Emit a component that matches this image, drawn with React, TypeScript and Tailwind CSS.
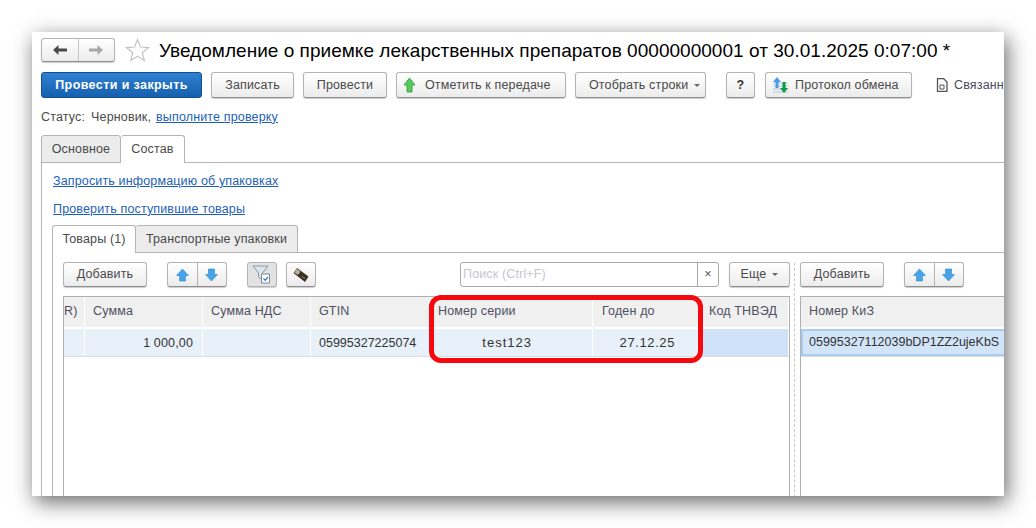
import type { ReactNode } from "react";

const btn =
  "flex shrink-0 items-center justify-center h-[26px] rounded-[3px] border border-[#b4b4b4] border-b-[#8f8f8f] bg-gradient-to-b from-white to-[#ececec] shadow-[0_1px_1px_rgba(0,0,0,0.2)] text-[#4a4a4a] whitespace-nowrap";

function Btn({ className, children }: { className: string; children: ReactNode }) {
  return <div className={`${btn} ${className}`}>{children}</div>;
}

function Caret() {
  return <span className="ml-[6px] h-0 w-0 border-x-[3px] border-t-[3px] border-x-transparent border-t-[#666]" />;
}

function ArrowPair() {
  return (
    <div className={`${btn} w-[60px] !h-[25px]`}>
      <div className="flex h-full w-[30px] items-center justify-center border-r border-[#b4b4b4]">
        <svg width="13" height="14" viewBox="0 0 13 14">
          <path d="M6.500 1 12.500 7.500H9.500V13h-6V7.500H.5z" fill="#45a5ea" stroke="#2f86c8" strokeWidth="0.6" />
        </svg>
      </div>
      <div className="flex h-full w-[29px] items-center justify-center">
        <svg width="13" height="14" viewBox="0 0 13 14">
          <path d="M6.500 13 12.500 6.500H9.500V1h-6v5.500H.5z" fill="#45a5ea" stroke="#2f86c8" strokeWidth="0.6" />
        </svg>
      </div>
    </div>
  );
}

function HeadCell({ className, children }: { className: string; children?: ReactNode }) {
  return (
    <div className={`flex h-[32px] shrink-0 items-center border-r border-b-2 border-white bg-[#f0f0f0] pb-[2px] pl-2 text-[#4f4f5f] ${className}`}>
      {children}
    </div>
  );
}

function RowCell({ className, children }: { className: string; children?: ReactNode }) {
  return <div className={`flex h-[27px] shrink-0 items-center border-r border-white bg-[#e8f0f9] pt-[1px] text-[#333] ${className}`}>{children}</div>;
}

export default function App() {
  return (
    <div className="h-[528px] w-[1036px] overflow-hidden bg-white pl-[32px] pt-[32px] font-['Liberation_Sans',Arial,sans-serif] text-[12.5px] tracking-[0.15px]">
      <div className="relative h-[464px] w-[972px] overflow-hidden bg-white shadow-[3px_6px_20px_rgba(0,0,0,0.6)]">
        <div className="flex h-[40px] items-start pl-[9px] pt-[6px]">
          <div className={`${btn} w-[74px] !h-[24px]`}>
            <div className="flex h-full w-[37px] items-center justify-center border-r border-[#c8c8c8]">
              <svg width="14" height="10" viewBox="0 0 14 10">
                <path d="M0 5 5.500 0v3.500H14v3H5.500V10z" fill="#4a4a4a" />
              </svg>
            </div>
            <div className="flex h-full w-[36px] items-center justify-center">
              <svg width="14" height="10" viewBox="0 0 14 10">
                <path d="M14 5 8.500 0v3.500H0v3h8.500V10z" fill="#a8a8a8" />
              </svg>
            </div>
          </div>
          <svg className="ml-[10px] shrink-0" width="25" height="24" viewBox="0 0 25 24">
            <path d="M12.500 1.500 15.500 9l8 .6-6.200 5.100 2 7.800-6.800-4.300-6.800 4.300 2-7.800L1.500 9.600l8-.6z" fill="#fff" stroke="#c4c4c4" strokeWidth="1.200" />
          </svg>
          <h1 className="ml-[9px] mt-[3px] whitespace-nowrap text-[19px] leading-[19px] tracking-[0.03px] text-black">
            Уведомление о приемке лекарственных препаратов 00000000001 от 30.01.2025 0:07:00 *
          </h1>
        </div>

        <div className="flex items-center pl-[9px]">
          <div className="flex h-[26px] w-[161px] shrink-0 items-center justify-center rounded-[3px] border border-[#0f4f94] bg-gradient-to-b from-[#2f80d0] to-[#1560ae] font-bold tracking-[0.4px] text-white">
            Провести и закрыть
          </div>
          <Btn className="ml-[9px] w-[83px]">Записать</Btn>
          <Btn className="ml-[9px] w-[84px]">Провести</Btn>
          <Btn className="ml-[9px] w-[170px] !justify-start pl-[6px]">
            <svg className="mr-[9px]" width="13" height="16" viewBox="0 0 13 16">
              <path d="M6.500 1 12 8H9v7H4V8H1z" fill="#55c95a" stroke="#2f9c3a" strokeWidth="0.8" />
            </svg>
            Отметить к передаче
          </Btn>
          <Btn className="ml-[9px] w-[131px] !justify-start pl-[13px]">
            Отобрать строки
            <Caret />
          </Btn>
          <Btn className="ml-[20px] w-[29px] font-bold text-[#333]">?</Btn>
          <Btn className="ml-[10px] w-[147px] !justify-start pl-[6px]">
            <svg className="mr-[6px]" width="17" height="17" viewBox="0 0 17 17">
              <path d="M1 6h15M1 9h15M1 12h15M1 15h15" stroke="#b4c4d4" strokeWidth="1" />
              <path d="M5 0 9 5H6.500v6h-3V5H1z" fill="#4a9bf0" />
              <path d="M12 16 8 11h2.500V5h3v6H16z" fill="#0c9a46" />
            </svg>
            Протокол обмена
          </Btn>
          <div className="ml-[24px] flex shrink-0 items-center whitespace-nowrap text-[#4a4a5a]">
            <svg className="mr-[6px]" width="12" height="14" viewBox="0 0 12 14">
              <path d="M1.500.5h6l3.500 3.500v9.500h-9.500z" fill="#fff" stroke="#555" strokeWidth="1.300" />
              <path d="M4 7h4v4H4z" fill="none" stroke="#555" strokeWidth="1" />
            </svg>
            Связанн
          </div>
        </div>

        <div className="mt-[10px] flex h-[18px] items-center pl-[9px] text-[#4a4a4a]">
          <span>Статус:</span>
          <span className="ml-[6px]">Черновик,</span>
          <a className="ml-[5px] text-[#1d5fb8] underline">выполните проверку</a>
        </div>

        <div className="mt-[9px] flex h-[28px] pl-[9px]">
          <div className="flex h-[28px] w-[80px] items-center justify-center rounded-t-[3px] border border-[#b4b4b4] bg-[#ececec] text-[#4a4a4a]">
            Основное
          </div>
          <div className="z-10 flex h-[28px] w-[64px] items-center justify-center rounded-t-[3px] border border-b-0 border-l-0 border-[#b4b4b4] bg-white text-[#4a4a4a]">
            Состав
          </div>
        </div>

        <div className="-mt-px ml-[9px] h-[400px] border-l border-t border-[#b4b4b4] pl-[10px]">
          <div className="mt-[9px] flex h-[18px] items-center pl-[1px]">
            <a className="text-[#1d5fb8] underline">Запросить информацию об упаковках</a>
          </div>
          <div className="mt-[10px] flex h-[18px] items-center pl-[1px]">
            <a className="text-[#1d5fb8] underline">Проверить поступившие товары</a>
          </div>

          <div className="mt-[7px] flex h-[28px]">
            <div className="z-10 flex h-[28px] w-[84px] items-center justify-center rounded-t-[3px] border border-b-0 border-[#b4b4b4] bg-white text-[#4a4a4a]">
              Товары (1)
            </div>
            <div className="flex h-[28px] w-[162px] items-center justify-center rounded-t-[3px] border border-l-0 border-[#b4b4b4] bg-[#ececec] text-[#4a4a4a]">
              Транспортные упаковки
            </div>
          </div>

          <div className="-mt-px h-[400px] border-l border-t border-[#b4b4b4] pl-[10px]">
            <div className="flex">
              <div className="w-[727px] shrink-0">
                <div className="flex h-[43px] items-center">
                  <Btn className="w-[84px] !h-[25px]">Добавить</Btn>
                  <div className="ml-[20px]">
                    <ArrowPair />
                  </div>
                  <div className="ml-[20px] flex h-[25px] w-[30px] shrink-0 items-center justify-center rounded-[3px] border border-[#b4b4b4] bg-[#e2e2e2] shadow-[0_1px_1px_rgba(0,0,0,0.2)]">
                    <svg width="20" height="19" viewBox="0 0 20 19">
                      <path d="M1 1h15l-5.500 7v7l-4-3V8z" fill="#dce6ee" stroke="#8a9aa8" strokeWidth="1" />
                      <path d="M9.500 9h8v9h-8z" fill="#fff" stroke="#7a8a98" strokeWidth="1" />
                      <path d="m11.500 13.500 1.700 1.800 2.800-3.500" fill="none" stroke="#2a6fd0" strokeWidth="1.200" />
                    </svg>
                  </div>
                  <div className={`${btn} ml-[9px] w-[30px] !h-[25px]`}>
                    <svg width="16" height="16" viewBox="0 0 16 16">
                      <path d="M4 1 15.500 9.500 12 15 .5 6z" fill="#3a3226" />
                      <path d="M3.800 1.800 7.500 4.500 5 8 1.300 5.500z" fill="#b8b09a" />
                      <path d="M9 9.500l3 2" stroke="#a08a50" strokeWidth="1" />
                    </svg>
                  </div>
                  <div className="ml-[144px] flex h-[25px] w-[259px] shrink-0 items-center rounded-[3px] border border-[#a8a8a8] bg-white">
                    <span className="flex-1 pl-[2px] text-[#c9c4d0]">Поиск (Ctrl+F)</span>
                    <span className="flex h-full w-[21px] items-center justify-center border-l border-[#a8a8a8] text-[#555]">×</span>
                  </div>
                  <Btn className="ml-[10px] w-[61px] !h-[25px]">
                    Еще
                    <Caret />
                  </Btn>
                </div>
                <div className="h-[300px] border-x border-t border-[#b0b0b0]">
                  <div className="flex">
                    <HeadCell className="w-[21px] !pl-0">R)</HeadCell>
                    <HeadCell className="w-[118px]">Сумма</HeadCell>
                    <HeadCell className="w-[108px]">Сумма НДС</HeadCell>
                    <HeadCell className="w-[120px]">GTIN</HeadCell>
                    <HeadCell className="w-[162px] !pl-[7px]">Номер серии</HeadCell>
                    <HeadCell className="w-[108px] !pl-[9px]">Годен до</HeadCell>
                    <HeadCell className="flex-1">Код ТНВЭД</HeadCell>
                  </div>
                  <div className="flex border-b border-[#dcdcdc]">
                    <RowCell className="w-[21px]" />
                    <RowCell className="w-[118px] justify-end pr-[9px]">1 000,00</RowCell>
                    <RowCell className="w-[108px]" />
                    <RowCell className="w-[120px] pl-2 tracking-[0px]">05995327225074</RowCell>
                    <RowCell className="w-[162px] justify-end pr-[60px] text-[13px] tracking-[1px]">test123</RowCell>
                    <RowCell className="w-[108px] justify-end pr-[25px] text-[13px] tracking-[0.6px]">27.12.25</RowCell>
                    <RowCell className="flex-1 !bg-[#cfe2f7]" />
                  </div>
                </div>
              </div>

              <div className="ml-[4px] mr-[5px] mt-[10px] h-[300px] border-l border-dashed border-[#c8c8c8]" />

              <div className="w-[220px] shrink-0">
                <div className="flex h-[43px] items-center">
                  <Btn className="w-[84px] !h-[25px]">Добавить</Btn>
                  <div className="ml-[20px]">
                    <ArrowPair />
                  </div>
                </div>
                <div className="h-[300px] border-l border-t border-[#b0b0b0]">
                  <div className="flex h-[32px] items-center border-b-2 border-white bg-[#f0f0f0] pb-[2px] pl-2 text-[#4f4f5f]">Номер КиЗ</div>
                  <div className="flex h-[27px] items-center border-2 border-r-0 border-[#a8cbee] bg-[#d2e4f8] pl-[6px] tracking-normal text-[#333]">
                    05995327112039bDP1ZZ2ujeKbS
                  </div>
                  <div className="h-px bg-[#dcdcdc]" />
                </div>
              </div>
            </div>
          </div>
        </div>

        <div className="absolute left-[397px] top-[263px] h-[68px] w-[274px] rounded-[12px] border-[5px] border-[#f5090f]" />
      </div>
    </div>
  );
}
